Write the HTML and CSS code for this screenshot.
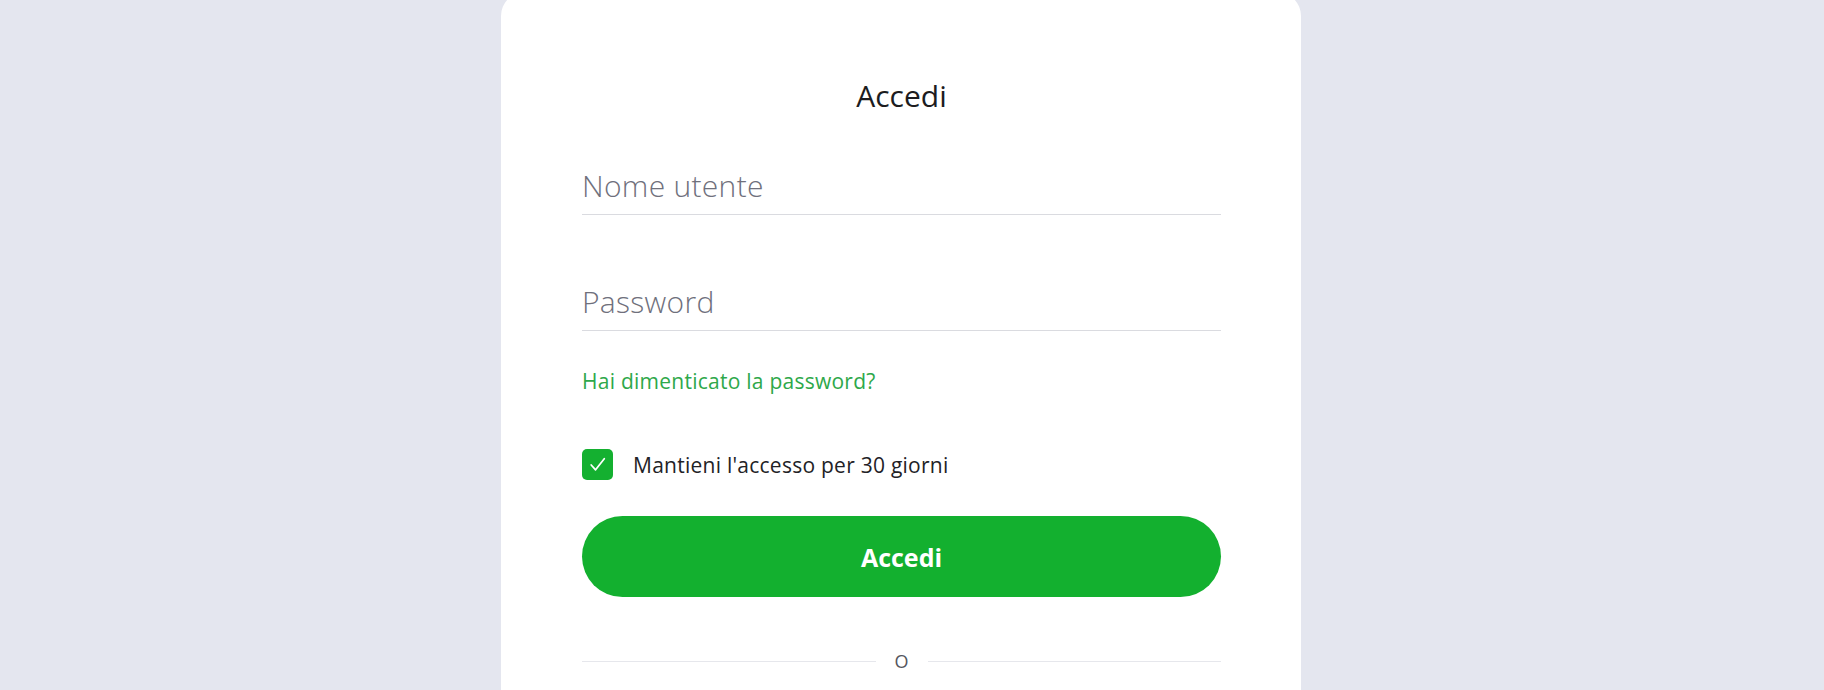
FILE: index.html
```html
<!DOCTYPE html>
<html lang="it">
<head>
<meta charset="utf-8">
<title>Accedi</title>
<link rel="stylesheet" href="styles.css">
</head>
<body>
<main class="card">
  <h1 class="title">Accedi</h1>
  <form class="form">
    <input class="field field-user" type="text" placeholder="Nome utente">
    <input class="field field-pass" type="password" placeholder="Password">
    <a class="forgot" href="#">Hai dimenticato la password?</a>
    <label class="remember">
      <span class="checkbox">
        <svg viewBox="0 0 32 32" width="31" height="31"><polyline points="9.5,16.5 14,21.5 23,10" fill="none" stroke="#ffffff" stroke-width="1.8" stroke-linecap="round" stroke-linejoin="round"/></svg>
      </span>
      <span class="remember-text">Mantieni l'accesso per 30 giorni</span>
    </label>
    <button class="submit" type="button">Accedi</button>
    <div class="divider"><span class="line"></span><span class="or">O</span><span class="line"></span></div>
  </form>
</main>
</body>
</html>
```
FILE: styles.css
```css
html, body {
  margin: 0;
  padding: 0;
  height: 100%;
  overflow: hidden;
}
body {
  background: #e4e6ef;
  font-family: "Open Sans", "DejaVu Sans", sans-serif;
}
.card {
  box-sizing: border-box;
  width: 800px;
  margin: -8px 0 0 501px;
  min-height: 760px;
  background: #ffffff;
  border-radius: 24px;
  padding: 84px 80px 40px 81px;
}
.title {
  margin: 0;
  font-size: 30px;
  line-height: 40px;
  font-weight: 400;
  color: #1c1c20;
  text-align: center;
}
.form {
  display: flex;
  flex-direction: column;
  margin-top: 42px;
}
.field {
  box-sizing: content-box;
  display: block;
  width: 100%;
  height: 54px;
  padding: 0 0 2px 0;
  margin: 0;
  border: none;
  border-bottom: 1px solid #dadbe0;
  outline: none;
  background: transparent;
  font-family: "Open Sans", "DejaVu Sans", sans-serif;
  font-size: 30px;
  font-weight: 300;
  letter-spacing: 0.3px;
  color: #333;
}
.field::placeholder {
  color: #6f707c;
  opacity: 1;
}
.field-pass {
  margin-top: 59px;
}
.forgot {
  margin-top: 36px;
  font-size: 21px;
  line-height: 28px;
  letter-spacing: 0.25px;
  color: #2ea84a;
  text-decoration: none;
  align-self: flex-start;
}
.remember {
  margin-top: 54px;
  display: flex;
  align-items: center;
  gap: 20px;
  height: 31px;
}
.checkbox {
  width: 31px;
  height: 31px;
  border-radius: 5px;
  background: #14b030;
  display: flex;
}
.remember-text {
  font-size: 21px;
  line-height: 28px;
  letter-spacing: 0.25px;
  color: #222226;
}
.submit {
  margin-top: 36px;
  height: 81px;
  border: none;
  border-radius: 41px;
  background: #13b02f;
  color: #ffffff;
  font-family: "Open Sans", "DejaVu Sans", sans-serif;
  font-size: 25px;
  font-weight: 700;
  cursor: pointer;
}
.divider {
  margin-top: 52px;
  display: flex;
  align-items: center;
  gap: 19px;
  height: 24px;
}
.line {
  flex: 1;
  height: 1px;
  background: #e6e7ec;
}
.or {
  font-size: 18px;
  line-height: 24px;
  color: #55565e;
}
```
